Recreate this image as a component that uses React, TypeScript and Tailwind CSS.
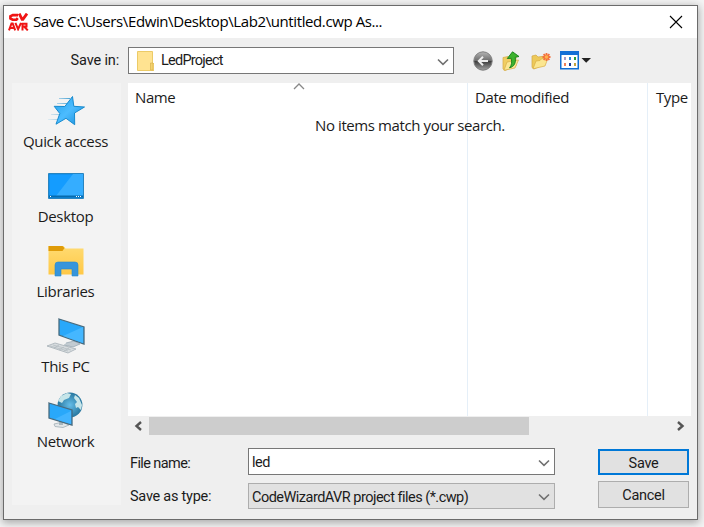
import React from "react";

const UI = "font-['Open_Sans','Noto_Sans',sans-serif]";
const SANS = "font-['Roboto','Liberation_Sans',sans-serif]";

function Chevron({ className = "" }: { className?: string }) {
  return (
    <svg width="12" height="8" viewBox="0 0 12 8" className={className} fill="none" stroke="#707070" strokeWidth="1.6">
      <path d="M1 1.5 6 6.3 11 1.5" />
    </svg>
  );
}

function Logo() {
  return (
    <svg width="21" height="18" viewBox="0 0 21 18" fill="none" stroke="#f01414">
      <path d="M10 2.1H4.8L2.4 3.3v2.2L4.6 6.7H8.4l1.4-1.6" strokeWidth="2.6" />
      <path d="M11.2.6l2.9 5.8h.8L19 .6" strokeWidth="2.8" />
      <path d="M1 17.4 3.5 10.4h1.2L7.2 17.4M2 15h4.5M7.4 9.8l2.7 6.4 2.9-6.4M14.5 17.4v-6.6h4v2.8h-3.8M16.3 13.8l3.5 3.6" strokeWidth="2" />
    </svg>
  );
}

function BackIcon() {
  return (
    <svg width="20" height="20" viewBox="0 0 20 20">
      <defs>
        <linearGradient id="back" x2="0" y2="1">
          <stop stopColor="#b5b5b5" />
          <stop offset=".48" stopColor="#6d6d6d" />
          <stop offset=".52" stopColor="#3d3d3d" />
          <stop offset="1" stopColor="#a5a5a5" />
        </linearGradient>
      </defs>
      <circle cx="10" cy="10" r="9.2" fill="url(#back)" stroke="#7d7d7d" strokeWidth="1" />
      <path d="M15 10H6M10 5.8 5.8 10l4.2 4.2" fill="none" stroke="#eee" strokeWidth="2" />
    </svg>
  );
}

function UpIcon() {
  return (
    <svg width="18" height="20" viewBox="0 0 18 20">
      <path d="M1 6.5l5-1 1 1.5 7-1v9L3 19.5 1 18z" fill="#f0cd62" stroke="#d6ab45" strokeWidth=".7" />
      <path d="M2 19.3 5 11l11.5-2L13 17z" fill="#fbe795" stroke="#d5ad47" strokeWidth=".7" />
      <path d="M7.5 16.8c2.3-2.5 2.5-5.5 1.7-9.5L5.3 7.5 10.5.8 17 5.5l-3.8.8c1 5.5-1 9.5-5.7 10.5z" fill="#3db32e" stroke="#16801a" strokeWidth=".9" />
    </svg>
  );
}

function NewFolderIcon() {
  return (
    <svg width="20" height="18" viewBox="0 0 20 18">
      <path d="M1 4l4-1 2 2 7-1v8L3 17 1 15.5z" fill="#edc959" stroke="#d3a744" strokeWidth=".7" />
      <path d="M2 16.8 5 9l4-.5 1.5-1.7L17 6l-3 8z" fill="#fbe690" stroke="#d8ad45" strokeWidth=".7" />
      <path d="M15.5 1v8M11.5 5h8M12.6 2.1l5.8 5.8M18.4 2.1l-5.8 5.8" stroke="#f3703d" strokeWidth="1.8" />
      <circle cx="15.5" cy="5" r="1.8" fill="#ffb04d" />
    </svg>
  );
}

function ViewIcon() {
  return (
    <svg width="31" height="19" viewBox="0 0 31 19">
      <rect x=".75" y=".75" width="17.5" height="17" fill="#fff" stroke="#0f6ed3" strokeWidth="1.5" />
      <rect x="0" y="0" width="19" height="4" fill="#126fd6" />
      <path d="M4 6h2v3H4z" fill="#a49ac7" />
      <path d="M9 6h2v3H9z" fill="#2d87d5" />
      <path d="M14 6h2v3h-2z" fill="#269d3d" />
      <path d="M4 12h2v3H4z" fill="#ef8056" />
      <path d="M9 12h2v3H9z" fill="#173c9a" />
      <path d="M14 12h2v3h-2z" fill="#c6a43e" />
      <path d="M21.5 7h9.5L26.2 11.8z" fill="#222" />
    </svg>
  );
}

function QuickIcon() {
  return (
    <svg width="38" height="32" viewBox="0 0 38 32">
      <defs>
        <linearGradient id="star" x2="1" y2="1">
          <stop stopColor="#23a0e9" />
          <stop offset=".5" stopColor="#4cbcff" />
          <stop offset="1" stopColor="#168bd8" />
        </linearGradient>
        <linearGradient id="trail">
          <stop stopColor="#8ac5e5" stopOpacity=".2" />
          <stop offset="1" stopColor="#4ba3d3" />
        </linearGradient>
      </defs>
      <path d="M11 3h11v1H11zM9 8h11v1H9zM3 19h8v1H3zM0 24h9v1H0z" fill="url(#trail)" />
      <path d="M24.5 1.5 25.8 11.3 36.5 12 26.5 18l.2 11.7-8.7-6.4L8 29.2l3.8-10.7-5.6-7.2 10.6.2z" fill="url(#star)" stroke="#168ace" strokeWidth="1" />
    </svg>
  );
}

function Screen({ points }: { points: string }) {
  return <polygon points={points} fill="#29a8fa" stroke="#496b7e" strokeWidth="1.3" />;
}

function DesktopIcon() {
  return (
    <svg width="36" height="26" viewBox="0 0 36 26">
      <rect x=".7" y=".7" width="34.6" height="24.6" fill="#149cff" stroke="#0770b3" strokeWidth="1" />
      <path d="M35 1v22H8L25 1z" fill="#35adff" />
      <path d="M1 23.5h34" stroke="#076bad" strokeWidth="2" />
      <path d="M2 23.5h1M28 23.5h1M30 23.5h1M32 23.5h1" stroke="#fff" />
    </svg>
  );
}

function LibrariesIcon() {
  return (
    <svg width="36" height="32" viewBox="0 0 36 32">
      <defs>
        <linearGradient id="lib" x2="0" y2="1"><stop stopColor="#ffdb72" /><stop offset="1" stopColor="#ffc846" /></linearGradient>
      </defs>
      <path d="M.5 1h15l2 2.5h18v26H.5z" fill="url(#lib)" />
      <path d="M.5 1h14l2 2-2 3H.5z" fill="#df9b08" />
      <path d="M7 31V20q0-3 3-3h17q3 0 3 3v11h-6v-7H13v7z" fill="#3795db" stroke="#2789cf" strokeWidth=".6" />
    </svg>
  );
}

function PcIcon() {
  return (
    <svg width="39" height="36" viewBox="0 0 39 36">
      <path d="m20 25 8-2 6 3-7 3-9-2" fill="#c2cbd1" stroke="#93a4af" strokeWidth=".7" />
      <Screen points="13,1 38,9 38,26 13,17" />
      <path d="M37 9 17 18l20 7z" fill="#45b7ff" />
      <path d="m1 28 8-3 21 6-8 4z" fill="#d7dcdf" stroke="#a6b0b6" strokeWidth=".8" />
      <path d="m4 28 18 5M7 27l18 5M8 30l5-3M13 32l5-3M18 33l5-3" stroke="#aab3b8" strokeWidth=".6" />
    </svg>
  );
}

function NetworkIcon() {
  return (
    <svg width="35" height="36" viewBox="0 0 35 36">
      <defs><radialGradient id="globe"><stop stopColor="#65bde8" /><stop offset="1" stopColor="#28779f" /></radialGradient></defs>
      <circle cx="22" cy="13" r="12.4" fill="url(#globe)" />
      <path d="m10 9 3-5 6-3 4 1-2 4-5 2-2 3zM27 3l4 3 3 7-1 5-3-3-2 1-1-4 2-2-3-4z" fill="#c6e5e9" />
      <path d="m6 32 9-2 6 3-6 2.5-8-1z" fill="#e2e6e8" stroke="#9fadb5" strokeWidth=".8" />
      <path d="M11 28v5h4v-5" fill="#a7b6bd" />
      <Screen points="1,11 24,18 24,33 1,26" />
      <path d="M23 19 7 27l16 5z" fill="#42b4ff" />
    </svg>
  );
}

function Place({ label, children }: { label: string; children: React.ReactNode }) {
  return (
    <div className="flex h-[75px] flex-col items-center pr-[2px]">
      <div className="flex h-[48px] items-end justify-center pb-1">{children}</div>
      <div className="h-[22px] whitespace-nowrap text-[15px] leading-[21px] tracking-[-0.33px]">{label}</div>
    </div>
  );
}

export default function App() {
  return (
    <div className="h-[527px] w-[704px] overflow-hidden bg-[#f5f5f5] pl-[3px] pt-[5px] text-[#1b1b1b]">
      <div className="flex h-[515px] w-[695px] flex-col border border-[#6b6b6b] bg-[#efefef] shadow-[0_2px_8px_1px_#aaa]">
        <header className={`flex h-8 shrink-0 items-center bg-white pl-1 pr-[14px] text-black ${UI}`}>
          <Logo />
          <span className="-mt-px ml-[4px] whitespace-nowrap text-[15px] tracking-[-0.4px]">Save C:\Users\Edwin\Desktop\Lab2\untitled.cwp As...</span>
          <svg className="ml-auto" width="14" height="14" viewBox="0 0 14 14" stroke="#000" strokeWidth="1.1"><path d="m1 1 12 12M13 1 1 13" /></svg>
        </header>

        <div className={`flex h-[45px] shrink-0 items-center ${SANS}`}>
          <div className="w-[124px] pr-[9px] text-right text-[14.5px] tracking-[-0.15px]">Save in:</div>
          <div className="flex h-[27px] w-[326px] items-center border border-[#777] bg-white pl-[8px] pr-[4px]">
            <svg width="17" height="20" viewBox="0 0 17 20"><path d="M.5.5h15v12H17V19.5H.5z" fill="#ffe391" stroke="#eccb67" /><path d="M13.5 19v-7H16v7z" fill="#f4d36e" stroke="#d8b34f" strokeWidth=".7" /></svg>
            <span className="ml-[7px] text-[14.5px] tracking-[-0.75px]">LedProject</span>
            <Chevron className="ml-auto mt-0.5" />
          </div>
          <div className="ml-[19px] flex items-center gap-[9px]">
            <BackIcon />
            <UpIcon />
            <div className="ml-[2px]"><NewFolderIcon /></div>
            <ViewIcon />
          </div>
        </div>

        <div className="flex min-h-0 flex-1 pl-2">
          <nav className={`h-[422px] w-[109px] shrink-0 bg-[#f3f3f3] ${UI}`}>
            <Place label="Quick access"><div className="translate-x-px"><QuickIcon /></div></Place>
            <Place label="Desktop"><div className="-translate-y-[3px]"><DesktopIcon /></div></Place>
            <Place label="Libraries"><LibrariesIcon /></Place>
            <Place label="This PC"><div className="translate-y-[2px]"><PcIcon /></div></Place>
            <Place label="Network"><div className="translate-y-px"><NetworkIcon /></div></Place>
          </nav>

          <main className="ml-[7px] w-[563px]">
            <section className={`relative flex h-[333px] bg-white text-[15px] leading-[28px] tracking-[-0.4px] ${UI}`}>
              <div className="relative w-[340px] border-r border-[#e5eff8] pl-[7px]">
                Name
                <svg className="absolute left-[165px] top-0" width="12" height="7" viewBox="0 0 12 7" fill="none" stroke="#888" strokeWidth="1.3"><path d="m1 6 5-5 5 5" /></svg>
              </div>
              <div className="w-[180px] border-r border-[#e5eff8] pl-[7px]">Date modified</div>
              <div className="pl-2">Type</div>
              <div className="absolute left-[187px] top-[30px] whitespace-nowrap leading-6">No items match your search.</div>
            </section>
            <div className="flex h-[19px] items-center px-[6px] pt-px">
              <svg width="8" height="10" viewBox="0 0 8 10" fill="none" stroke="#555" strokeWidth="2.4"><path d="M7 1 2.5 5 7 9" /></svg>
              <div className="ml-[7px] h-[18px] w-[380px] bg-[#cdcdcd]" />
              <svg className="ml-auto" width="9" height="10" viewBox="0 0 9 10" fill="none" stroke="#555" strokeWidth="2.4"><path d="M2 1l4.5 4L2 9" /></svg>
            </div>

            <div className={`mt-[13px] flex text-[14.5px] ${SANS}`}>
              <div className="w-[120px] pl-[2px]">
                <div className="h-[33px] leading-[31px] tracking-[-0.6px]">File name:</div>
                <div className="leading-[31px] tracking-[-0.25px]">Save as type:</div>
              </div>
              <div className="flex w-[307px] flex-col gap-2">
                <div className="flex h-[27px] items-center border border-[#777] bg-white pl-[3px] pr-[4px] tracking-[-0.5px]"><span className="pt-[3px]">led</span><Chevron className="ml-auto mt-[3px]" /></div>
                <div className="flex h-[26px] items-center whitespace-nowrap border border-[#adadad] bg-[#e1e1e1] pl-[3px] pr-[4px] tracking-[-0.52px]"><span className="pt-[3px]">CodeWizardAVR project files (*.cwp)</span><Chevron className="ml-auto mt-px" /></div>
              </div>
              <div className="ml-[43px] flex w-[91px] flex-col gap-[6px] pt-px">
                <button className="h-[26px] border-2 border-[#0078d7] bg-[#e1e1e1] pt-[2px] tracking-[-0.3px]">Save</button>
                <button className="h-[27px] border border-[#adadad] bg-[#e1e1e1] pt-[3px] tracking-[-0.3px]">Cancel</button>
              </div>
            </div>
          </main>
        </div>
      </div>
    </div>
  );
}
